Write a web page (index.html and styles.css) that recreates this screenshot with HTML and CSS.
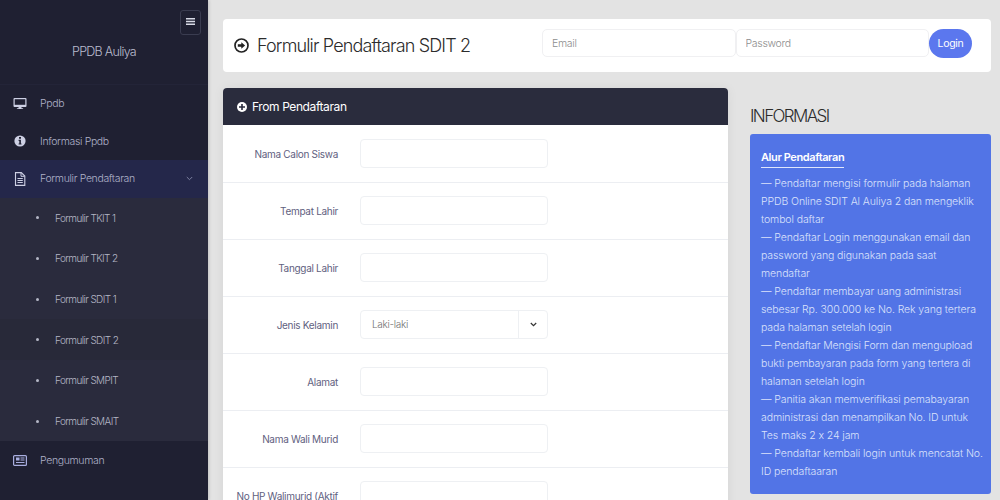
FILE: index.html
```html
<!DOCTYPE html>
<html lang="id">
<head>
  <meta charset="UTF-8">
  <title>PPDB Auliya</title>
  <link rel="stylesheet" href="styles.css">
</head>
<body>
  <div class="layout">
    <aside class="sidebar">
      <div class="toggle-row">
        <button class="toggle">
          <svg width="9" height="9" viewBox="0 0 9 9"><path d="M0 1h9v1.5H0zM0 3.8h9v1.5H0zM0 6.6h9v1.5H0z" fill="#d8dae6"/></svg>
        </button>
      </div>
      <div class="brand">PPDB Auliya</div>
      <nav class="menu">
        <a class="menu-item">
          <svg class="menu-icon" width="13" height="12" viewBox="0 0 13 12"><path d="M1 0h11a1 1 0 0 1 1 1v7a1 1 0 0 1-1 1H8v1.2h1.6V11H3.4v-.8H5V9H1a1 1 0 0 1-1-1V1a1 1 0 0 1 1-1z" fill="#cdd0e4"/><path d="M1.2 1.2h10.600v5.600H1.200z" fill="#1f2032"/></svg>
          Ppdb
        </a>
        <a class="menu-item">
          <svg class="menu-icon" width="13" height="12" viewBox="0 0 12 12"><circle cx="6" cy="6" r="5.6" fill="#cdd0e4"/><path d="M5 2h2v1.7H5zM4.6 4.8h2.3v3.6h.6v1.1H4.6V8.400h.7V5.900h-.7z" fill="#1f2032"/></svg>
          Informasi Ppdb
        </a>
        <a class="menu-item active">
          <svg class="menu-icon" width="13" height="14" viewBox="0 0 11 14"><path d="M1 .6h5.800L10.300 4v9.400H1z" fill="none" stroke="#cdd0e4" stroke-width="1.100"/><path d="M6.500.8v3.500h3.600M3 6.500h5.300M3 8.500h5.300M3 10.500h5.300" fill="none" stroke="#cdd0e4"/></svg>
          Formulir Pendaftaran
          <svg class="caret" width="7" height="5" viewBox="0 0 7 5"><path d="M.8 1l2.700 2.700L6.200 1" fill="none" stroke="#7d81a0"/></svg>
        </a>
        <div class="submenu">
          <a class="sub-item">Formulir TKIT 1</a>
          <a class="sub-item">Formulir TKIT 2</a>
          <a class="sub-item">Formulir SDIT 1</a>
          <a class="sub-item current">Formulir SDIT 2</a>
          <a class="sub-item">Formulir SMPIT</a>
          <a class="sub-item">Formulir SMAIT</a>
        </div>
        <a class="menu-item">
          <svg class="menu-icon" width="14" height="11" viewBox="0 0 14 11"><rect x=".6" y=".6" width="12.800" height="9.800" rx="1" fill="none" stroke="#a9aee0" stroke-width="1.200"/><path d="M3 2.500h3.500v3H3z" fill="#a9aee0"/><path d="M7.500 3h4M7.500 5h4M3 7.500h8.500" stroke="#a9aee0"/></svg>
          Pengumuman
        </a>
      </nav>
    </aside>

    <main class="content">
      <header class="topbar">
        <h1 class="page-title">
          <svg width="15" height="15" viewBox="0 0 15 15"><circle cx="7.500" cy="7.500" r="6.500" fill="none" stroke="#222" stroke-width="1.700"/><path d="M3.800 6.300h3.500V4.200l3.800 3.300-3.800 3.300V8.700H3.800z" fill="#222"/></svg>
          <span>Formulir Pendaftaran SDIT 2</span>
        </h1>
        <form class="login">
          <input class="login-input" placeholder="Email">
          <input class="login-input" placeholder="Password">
          <button class="login-btn" type="button">Login</button>
        </form>
      </header>

      <div class="columns">
        <section class="form-card">
          <div class="form-head">
            <svg width="10" height="10" viewBox="0 0 10 10"><circle cx="5" cy="5" r="5" fill="#fff"/><path d="M4.200 2h1.600v2.200H8v1.600H5.800V8H4.200V5.800H2V4.200h2.200z" fill="#2a2c3d"/></svg>
            From Pendaftaran
          </div>
          <div class="form-row"><label>Nama Calon Siswa</label><input class="field"></div>
          <div class="form-row"><label>Tempat Lahir</label><input class="field"></div>
          <div class="form-row"><label>Tanggal Lahir</label><input class="field"></div>
          <div class="form-row">
            <label>Jenis Kelamin</label>
            <div class="field select">
              <span class="select-value">Laki-laki</span>
              <span class="select-arrow">
                <svg width="7" height="5" viewBox="0 0 7 5"><path d="M.8 1l2.700 2.700L6.200 1" fill="none" stroke="#333" stroke-width="1.200"/></svg>
              </span>
            </div>
          </div>
          <div class="form-row"><label>Alamat</label><input class="field"></div>
          <div class="form-row"><label>Nama Wali Murid</label><input class="field"></div>
          <div class="form-row"><label>No HP Walimurid (Aktif</label><input class="field"></div>
        </section>

        <aside class="info">
          <h2 class="info-title">INFORMASI</h2>
          <div class="info-box">
            <h3 class="info-head">Alur Pendaftaran</h3>
            <p class="info-text">
              — Pendaftar mengisi formulir pada halaman<br>
              PPDB Online SDIT Al Auliya 2 dan mengeklik<br>
              tombol daftar<br>
              — Pendaftar Login menggunakan email dan<br>
              password yang digunakan pada saat<br>
              mendaftar<br>
              — Pendaftar membayar uang administrasi<br>
              sebesar Rp. 300.000 ke No. Rek yang tertera<br>
              pada halaman setelah login<br>
              — Pendaftar Mengisi Form dan mengupload<br>
              bukti pembayaran pada form yang tertera di<br>
              halaman setelah login<br>
              — Panitia akan memverifikasi pemabayaran<br>
              administrasi dan menampilkan No. ID untuk<br>
              Tes maks 2 x 24 jam<br>
              — Pendaftar kembali login untuk mencatat No.<br>
              ID pendaftaaran
            </p>
          </div>
        </aside>
      </div>
    </main>
  </div>
</body>
</html>
```

FILE: styles.css
```css
* {
  box-sizing: border-box;
}
html, body {
  margin: 0;
  height: 500px;
  overflow: hidden;
}
body {
  font-family: Inter, "Noto Sans", sans-serif;
  background: #e3e3e3;
  color: #333;
}
.layout {
  display: flex;
  height: 500px;
}

/* sidebar */
.sidebar {
  width: 208px;
  flex-shrink: 0;
  background: #1f2032;
  box-shadow: 1px 0 3px rgba(0,0,0,.15);
  color: #aeb1c8;
}
.toggle-row {
  display: flex;
  justify-content: flex-end;
  padding: 10px 7px 0 0;
}
.toggle {
  width: 21px;
  height: 25px;
  padding: 0 0 3px;
  display: flex;
  align-items: center;
  justify-content: center;
  background: #1f2032;
  border: 1px solid #3a3c50;
  border-radius: 3px;
}
.brand {
  height: 50px;
  padding-top: 9px;
  text-align: center;
  font-size: 12.500px;
  font-weight: 300;
  letter-spacing: -.7px;
  color: #b9bbce;
  border-bottom: 1px solid #232438;
}
.menu-item {
  display: flex;
  align-items: center;
  height: 37.500px;
  padding-left: 13px;
  font-size: 10.500px;
  font-weight: 300;
  letter-spacing: -.35px;
}
.menu-icon {
  width: 14px;
  margin-right: 13px;
}
.menu-item.active {
  background: #24274a;
}
.caret {
  margin-left: auto;
  margin-right: 15px;
}
.submenu {
  background: #2a2b3d;
}
.sub-item {
  display: flex;
  align-items: center;
  height: 40.670px;
  padding-left: 36px;
  font-size: 10px;
  font-weight: 300;
  letter-spacing: -.6px;
  color: #b5b7c6;
}
.sub-item::before {
  content: "";
  width: 3px;
  height: 3px;
  margin-right: 16px;
  border-radius: 50%;
  background: #b5b7c6;
}
.sub-item.current {
  background: #282939;
}

/* main */
.content {
  flex: 1;
  padding: 19px 9px 0 15px;
}
.topbar {
  display: flex;
  align-items: center;
  height: 53px;
  padding-left: 11px;
  background: #fff;
  border-radius: 4px;
}
.page-title {
  display: flex;
  align-items: center;
  gap: 8px;
  width: 308px;
  margin: 0;
  font-size: 18px;
  font-weight: 300;
  letter-spacing: -.85px;
  white-space: nowrap;
  color: #2c2c2c;
}
.login {
  display: flex;
  align-items: center;
  margin-top: -5px;
}
.login-input {
  width: 193.500px;
  height: 28px;
  padding: 0 9px;
  font: 300 10.500px Inter, sans-serif;
  letter-spacing: -.3px;
  border: 1px solid #f0f0f2;
  border-radius: 5px;
  background: #fff;
}
.login-input::placeholder {
  color: #8d8d8d;
}
.login-btn {
  width: 43px;
  height: 29px;
  padding: 0;
  font: 400 10.500px Inter, sans-serif;
  letter-spacing: -.3px;
  color: #fff;
  background: #5b77ee;
  border: none;
  border-radius: 15px;
}
.columns {
  display: flex;
  align-items: flex-start;
  margin-top: 16px;
}

/* form */
.form-card {
  width: 505px;
  background: #fff;
  border-radius: 4px 4px 0 0;
  box-shadow: 0 0 12px rgba(0,0,0,.06);
}
.form-head {
  display: flex;
  align-items: center;
  gap: 5px;
  height: 37px;
  margin-bottom: 1px;
  padding-left: 14px;
  font-size: 12px;
  letter-spacing: -.4px;
  color: #fff;
  background: #2a2c3d;
  border-radius: 4px 4px 0 0;
}
.form-row {
  display: flex;
  align-items: center;
  height: 57px;
  border-bottom: 1px solid #eceef2;
}
.form-row label {
  width: 115px;
  margin-right: 22px;
  text-align: right;
  font-size: 10px;
  white-space: nowrap;
  letter-spacing: -.3px;
  color: #5f6180;
}
.field {
  width: 188px;
  height: 29px;
  margin-top: -2px;
  border: 1px solid #eef0f3;
  border-radius: 4px;
  background: #fff;
}
.select {
  display: flex;
  align-items: center;
  font-size: 10px;
  font-weight: 300;
  letter-spacing: -.3px;
  color: #707070;
}
.select-value {
  flex: 1;
  padding-left: 11px;
}
.select-arrow {
  display: flex;
  align-items: center;
  justify-content: center;
  width: 29px;
  height: 100%;
  border-left: 1px solid #eef0f3;
}

/* info */
.info {
  width: 241px;
  margin-left: 22px;
}
.info-title {
  margin: 17px 0 7px;
  font-size: 17px;
  line-height: 22px;
  font-weight: 300;
  letter-spacing: -1.600px;
  color: #2c2c2c;
}
.info-box {
  height: 360px;
  padding: 11px 11px;
  color: #dbe2fb;
  background: #5274e6;
  border-radius: 3px;
}
.info-head {
  display: inline-block;
  margin: 0;
  padding-bottom: 2px;
  font-size: 11px;
  line-height: 15px;
  font-weight: 600;
  letter-spacing: -.4px;
  color: #fff;
  border-bottom: 1px solid #dfe6fc;
}
.info-text {
  margin: 7px 0 0;
  font-size: 10.500px;
  line-height: 18px;
  font-weight: 300;
  letter-spacing: -.1px;
  white-space: nowrap;
}
```
